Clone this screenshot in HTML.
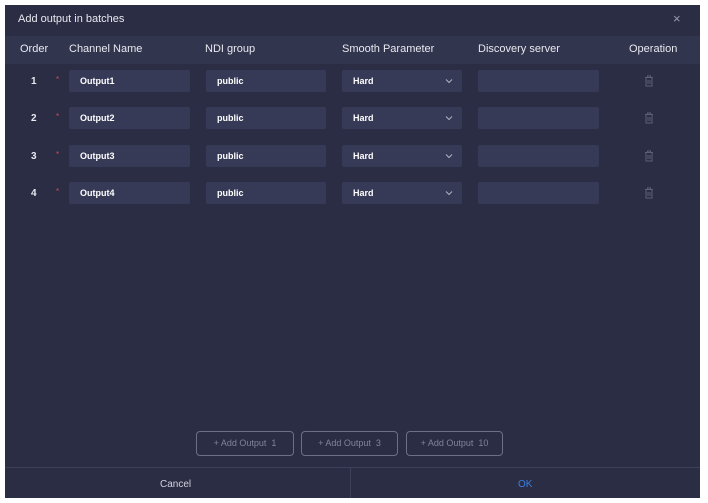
<!DOCTYPE html>
<html><head><style>
*{margin:0;padding:0;box-sizing:border-box}
body{width:708px;height:503px;background:#fff;font-family:"Liberation Sans",sans-serif;position:relative;overflow:hidden}
.dlg{position:absolute;left:5px;top:5px;width:695px;height:493px;background:#2b2d44}
.t{position:absolute;color:#e8e9f0;font-size:11px;white-space:nowrap}
.hdr{position:absolute;left:0;top:31px;width:695px;height:28px;background:#32354e}
.in{position:absolute;height:22px;background:#363a56;border-radius:2px;color:#fff;font-size:9px;font-weight:bold;line-height:22px;padding-left:11px}
.btn{position:absolute;top:431px;height:25px;border:1px solid #6c6f85;border-radius:4px;color:#80839a;font-size:9px;line-height:23px;text-align:center}
</style></head><body>
<div class="dlg">
<div class="t" style="left:13px;top:8px;font-size:11px">Add output in batches</div>
<div class="t" style="left:668px;top:6px;font-size:13px;color:#9a9cb0">×</div>
<div class="hdr"></div>
<div class="t" style="left:15px;top:38px">Order</div>
<div class="t" style="left:64px;top:38px">Channel Name</div>
<div class="t" style="left:200px;top:38px">NDI group</div>
<div class="t" style="left:337px;top:38px">Smooth Parameter</div>
<div class="t" style="left:473px;top:38px">Discovery server</div>
<div class="t" style="left:624px;top:38px">Operation</div>
</div>
<div id="rows"></div>
<script>
var ys=[70,107,145,182],h='';
ys.forEach(function(y,i){
h+='<div class="t" style="left:31px;top:'+(y+6)+'px;font-weight:bold;font-size:10px">'+(i+1)+'</div>';
h+='<div class="t" style="left:56px;top:'+(y+5)+'px;color:#d04a5a;font-size:8px">*</div>';
h+='<div class="in" style="left:69px;top:'+y+'px;width:121px">Output'+(i+1)+'</div>';
h+='<div class="in" style="left:206px;top:'+y+'px;width:120px">public</div>';
h+='<div class="in" style="left:342px;top:'+y+'px;width:120px">Hard<svg style="position:absolute;left:103px;top:8px" width="8" height="6" viewBox="0 0 8 6"><path d="M1 1.5L4 4.5L7 1.5" fill="none" stroke="#b0b3c4" stroke-width="1"/></svg></div>';
h+='<div class="in" style="left:478px;top:'+y+'px;width:121px"></div>';
h+='<svg style="position:absolute;left:644px;top:'+(y+5)+'px" width="10" height="12" viewBox="0 0 10 12"><path d="M1 2.5H9M3.5 2.5V1H6.5V2.5M2 2.5V11H8V2.5M4 5V9M6 5V9" fill="none" stroke="#5c5f78" stroke-width="1"/></svg>';
});
h+='<div class="btn" style="left:196px;width:98px">+ Add Output &nbsp;1</div>';
h+='<div class="btn" style="left:301px;width:97px">+ Add Output &nbsp;3</div>';
h+='<div class="btn" style="left:406px;width:97px">+ Add Output &nbsp;10</div>';
h+='<div style="position:absolute;left:5px;top:467px;width:695px;height:1px;background:#3d4058"></div>';
h+='<div style="position:absolute;left:350px;top:468px;width:1px;height:30px;background:#3d4058"></div>';
h+='<div class="t" style="left:160px;top:479px;font-size:10px;color:#d0d2dc">Cancel</div>';
h+='<div class="t" style="left:518px;top:479px;font-size:10px;color:#3a7fe0">OK</div>';
document.getElementById('rows').innerHTML=h;
</script>
</body></html>
